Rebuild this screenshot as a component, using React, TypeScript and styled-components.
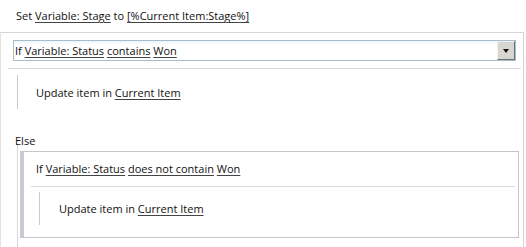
import React from 'react'
import styled, { createGlobalStyle } from 'styled-components'

const GlobalStyle = createGlobalStyle`
  html, body {
    margin: 0;
    padding: 0;
    background: #fff;
  }
  body {
    font-family: 'Open Sans', 'Noto Sans', sans-serif;
    font-size: 11px;
    color: #111;
  }
  * {
    box-sizing: border-box;
  }
`

const Page = styled.div`
  width: 526px;
  height: 247px;
  overflow: hidden;
`

const SetRow = styled.div`
  height: 32px;
  padding: 6px 0 0 16px;
  line-height: 20px;
  white-space: nowrap;
`

const Link = styled.span`
  text-decoration: underline;
  text-underline-offset: 2px;
  text-decoration-color: #444;
`

const Block = styled.div`
  width: 524px;
  height: 215px;
  border-top: 1px solid #d5d5d5;
  border-left: 1px solid #e2e2e2;
  border-right: 1px solid #d5d5d5;
`

const ConditionBox = styled.div`
  display: flex;
  width: 503px;
  height: 21px;
  margin: 7px 0 0 12px;
  border: 1px solid #a9bccb;
  background: linear-gradient(#eef6fb, #fff 4px);
`

const ConditionText = styled.div`
  flex: 1;
  padding-left: 1px;
  line-height: 19px;
  white-space: nowrap;
`

const DropButton = styled.div`
  width: 18px;
  display: flex;
  align-items: center;
  justify-content: center;
  background: #d8d6d0;
  border-top: 1px solid #f2f2f2;
  border-left: 1px solid #f2f2f2;
  border-right: 1px solid #6f6f6f;
  border-bottom: 1px solid #6f6f6f;
`

const Arrow = styled.span`
  width: 0;
  height: 0;
  margin-top: 1px;
  border-left: 3.5px solid transparent;
  border-right: 3.5px solid transparent;
  border-top: 4px solid #111;
`

const Divider = styled.div<{ $left: number; $width: number; $top: number }>`
  height: 1px;
  margin: ${p => p.$top}px 0 0 ${p => p.$left}px;
  width: ${p => p.$width}px;
  background: #d9d9d9;
`

const Action = styled.div<{ $left: number; $top: number; $pad: number; $height: number }>`
  display: flex;
  align-items: center;
  height: ${p => p.$height}px;
  margin: ${p => p.$top}px 0 0 ${p => p.$left}px;
  padding: 0 0 0 ${p => p.$pad}px;
  border-left: 1px solid #cbcbcb;
  white-space: nowrap;
`

const ElseLabel = styled.div`
  height: 13px;
  margin-top: 22px;
  padding-left: 14px;
  line-height: 20px;
`

const ElseBranch = styled.div`
  height: 100%;
  margin-left: 16px;
  padding: 7px 0 0 2px;
  border-left: 1px solid #d6d6d6;
`

const NestedBox = styled.div`
  width: 499px;
  height: 87px;
  border: 1px solid #c6c6c6;
  border-left: 4px solid #cacad6;
`

const NestedHeader = styled.div`
  height: 34px;
  padding-left: 12px;
  line-height: 34px;
  white-space: nowrap;
`

export default function App() {
  return (
    <Page>
      <GlobalStyle />
      <SetRow>
        Set <Link>Variable: Stage</Link> to <Link>[%Current Item:Stage%]</Link>
      </SetRow>
      <Block>
        <ConditionBox>
          <ConditionText>
            If <Link>Variable: Status</Link> <Link>contains</Link> <Link>Won</Link>
          </ConditionText>
          <DropButton>
            <Arrow />
          </DropButton>
        </ConditionBox>
        <Divider $left={7} $width={513} $top={7} />
        <Action $left={16} $top={6} $pad={18} $height={34}>
          Update item in&nbsp;<Link>Current Item</Link>
        </Action>
        <ElseLabel>Else</ElseLabel>
        <ElseBranch>
          <NestedBox>
            <NestedHeader>
              If <Link>Variable: Status</Link> <Link>does not contain</Link> <Link>Won</Link>
            </NestedHeader>
            <Divider $left={7} $width={484} $top={0} />
            <Action $left={15} $top={5} $pad={19} $height={33}>
              Update item in&nbsp;<Link>Current Item</Link>
            </Action>
          </NestedBox>
        </ElseBranch>
      </Block>
    </Page>
  )
}
